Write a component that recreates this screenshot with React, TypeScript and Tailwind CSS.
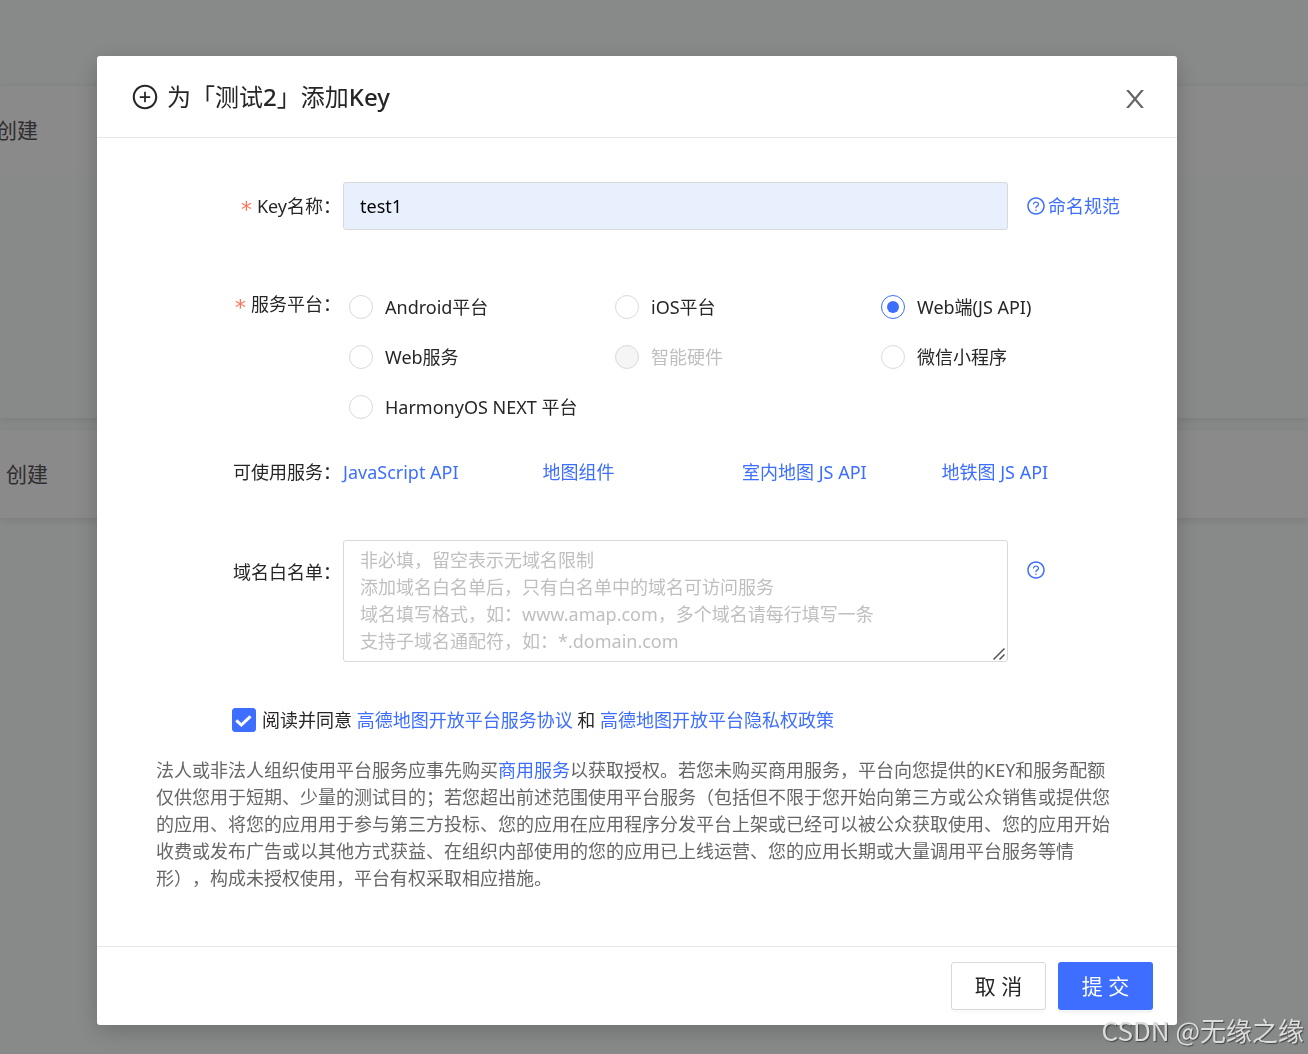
import { useState } from "react"
import { AiOutlinePlusCircle, AiOutlineQuestionCircle } from "react-icons/ai"

const platforms = [
    { id: "android", label: "Android平台" },
    { id: "ios", label: "iOS平台" },
    { id: "web", label: "Web端(JS API)" },
    { id: "webservice", label: "Web服务" },
    { id: "hardware", label: "智能硬件", disabled: true },
    { id: "wechat", label: "微信小程序" },
    { id: "harmony", label: "HarmonyOS NEXT 平台" },
]

const services = ["JavaScript API", "地图组件", "室内地图 JS API", "地铁图 JS API"]

const domainPlaceholder = `非必填，留空表示无域名限制
添加域名白名单后，只有白名单中的域名可访问服务
域名填写格式，如：www.amap.com，多个域名请每行填写一条
支持子域名通配符，如：*.domain.com`

function CloseIcon() {
    return (
        <svg viewBox="0 0 1024 1024" fill="currentColor" className="size-7">
            <path d="M563.8 512l262.5-312.9c4.4-5.2.7-13.1-6.1-13.1h-79.8c-4.7 0-9.2 2.1-12.3 5.7L511.6 449.8 295.1 191.7c-3-3.6-7.5-5.7-12.3-5.7H203c-6.8 0-10.5 7.9-6.1 13.1L459.4 512 196.9 824.9A7.95 7.95 0 0 0 203 838h79.8c4.7 0 9.2-2.1 12.3-5.7l216.5-258.1 216.5 258.1c3 3.6 7.5 5.7 12.3 5.7h79.8c6.8 0 10.5-7.9 6.1-13.1L563.8 512z" />
        </svg>
    )
}

function Required() {
    return <span className="mr-1 pt-1.5 font-['DejaVu_Sans_Mono',monospace] text-[22px] text-[#ff7358]">*</span>
}

function Background() {
    return (
        <div className="h-screen overflow-hidden bg-[#f7fbf9] pt-[86px] text-[21px] text-[#555]">
            <div className="shadow-[0_2px_8px_rgba(0,0,0,0.1)]">
                <div className="flex h-[89px] items-center bg-[#fdfbfb]">
                    <span className="-ml-1">创建</span>
                </div>
                <div className="h-[243px] bg-[#f7fbf9]" />
            </div>
            <div className="mt-3 flex h-[88px] items-center bg-[#fdfbfb] shadow-[0_2px_8px_rgba(0,0,0,0.1)]">
                <span className="ml-1.5">创建</span>
            </div>
        </div>
    )
}

export default function App() {
    const [name, setName] = useState("test1")
    const [platform, setPlatform] = useState("web")
    const [domains, setDomains] = useState("")
    const [agree, setAgree] = useState(true)

    return (
        <div className="font-['Noto_Sans','Noto_Sans_CJK_SC',sans-serif] text-lg leading-[27px] text-[#262626] [text-spacing-trim:space-all]">
            <Background />

            <div className="fixed inset-0 flex items-start justify-center overflow-hidden bg-black/45 pt-14 pr-[34px]">
                <div role="dialog" aria-labelledby="title" className="w-[1080px] rounded-[3px] bg-white shadow-[0_6px_24px_rgba(0,0,0,0.2)]">
                    <div className="flex h-[82px] items-center justify-between border-b border-[#e8e8e8] pr-7 pl-[34px]">
                        <h1 id="title" className="flex items-center gap-2 text-2xl">
                            <AiOutlinePlusCircle className="size-7" />
                            <span>为「测试<b className="font-medium">2</b>」添加<b className="font-medium">Key</b></span>
                        </h1>
                        <button aria-label="关闭" className="pt-1 text-[#666]">
                            <CloseIcon />
                        </button>
                    </div>

                    <form className="px-9 pt-11 pb-[54px]" onSubmit={(event) => event.preventDefault()}>
                        <div className="flex">
                            <label htmlFor="name" className="flex h-12 w-[210px] shrink-0 items-center justify-end pr-0.5">
                                <Required />
                                Key名称：
                            </label>
                            <div className="flex grow items-center">
                                <input
                                    id="name"
                                    value={name}
                                    onChange={(event) => setName(event.target.value)}
                                    className="h-12 w-5/6 rounded-[3px] border border-[#d9d9d9] bg-[#e8f0fe] px-4 text-black"
                                />
                                <a href="#" className="ml-[18px] flex items-center gap-0.5 text-[#3d6eff]">
                                    <AiOutlineQuestionCircle className="size-5" />
                                    命名规范
                                </a>
                            </div>
                        </div>

                        <div role="radiogroup" aria-labelledby="platform" className="mt-[50px] flex">
                            <span id="platform" className="flex h-12 w-[210px] shrink-0 items-center justify-end pr-0.5">
                                <Required />
                                服务平台：
                            </span>
                            <div className="grid grow grid-cols-3 pt-0.5">
                                {platforms.map((item) => (
                                    <label key={item.id} className={item.disabled ? "flex h-[50px] items-center gap-3 pl-1.5 text-[#bfbfbf]" : "flex h-[50px] items-center gap-3 pl-1.5"}>
                                        <input
                                            type="radio"
                                            name="platform"
                                            value={item.id}
                                            disabled={item.disabled}
                                            checked={platform == item.id}
                                            onChange={() => setPlatform(item.id)}
                                            className="grid size-6 shrink-0 appearance-none place-items-center rounded-full border border-[#d9d9d9] bg-white checked:border-[#3d6eff] checked:before:size-3 checked:before:rounded-full checked:before:bg-[#3d6eff] disabled:bg-[#f5f5f5]"
                                        />
                                        {item.label}
                                    </label>
                                ))}
                            </div>
                        </div>

                        <div className="mt-4 flex items-center">
                            <span className="flex h-12 w-[210px] shrink-0 items-center justify-end pr-0.5">可使用服务：</span>
                            <div className="grid grow grid-cols-4">
                                {services.map((service) => (
                                    <a key={service} href="#" className="text-[#3d6eff]">{service}</a>
                                ))}
                            </div>
                        </div>

                        <div className="mt-11 flex">
                            <label htmlFor="domains" className="flex h-16 w-[210px] shrink-0 items-center justify-end pr-0.5">域名白名单：</label>
                            <div className="flex grow items-start">
                                <span className="relative w-5/6">
                                    <textarea
                                        id="domains"
                                        value={domains}
                                        onChange={(event) => setDomains(event.target.value)}
                                        placeholder={domainPlaceholder}
                                        className="block h-[122px] w-full resize-none rounded-[3px] border border-[#d9d9d9] px-4 py-1.5 placeholder:text-[#bfbfbf]"
                                    />
                                    <svg viewBox="0 0 12 12" fill="none" stroke="#555" strokeWidth="1.5" className="pointer-events-none absolute right-[3px] bottom-0.5 size-3">
                                        <path d="M0.5 11.5L11.5 0.5M6.5 11.5L11.5 6.5" />
                                    </svg>
                                </span>
                                <button type="button" aria-label="帮助" className="mt-5 ml-[18px] text-[#3d6eff]">
                                    <AiOutlineQuestionCircle className="size-5" />
                                </button>
                            </div>
                        </div>

                        <div className="mt-[46px] ml-[99px] flex h-6 items-center gap-1.5">
                            <span className="relative size-6">
                                <input
                                    id="agree"
                                    type="checkbox"
                                    checked={agree}
                                    onChange={(event) => setAgree(event.target.checked)}
                                    className="block size-6 appearance-none rounded-[3px] border border-[#d9d9d9] checked:border-[#3d6eff] checked:bg-[#3d6eff]"
                                />
                                <svg viewBox="0 0 24 24" fill="none" stroke="white" strokeWidth="3" className="pointer-events-none absolute inset-0">
                                    <path d="M4.3 12.3l5 4.7L18.5 8.3" />
                                </svg>
                            </span>
                            <p>
                                <label htmlFor="agree">阅读并同意</label> <a href="#" className="text-[#3d6eff]">高德地图开放平台服务协议</a> 和 <a href="#" className="text-[#3d6eff]">高德地图开放平台隐私权政策</a>
                            </p>
                        </div>

                        <p className="mx-[23px] mt-[25px] text-[#666]">
                            法人或非法人组织使用平台服务应事先购买<a href="#" className="text-[#3d6eff]">商用服务</a>以获取授权。若您未购买商用服务，平台向您提供的KEY和服务配额仅供您用于短期、少量的测试目的；若您超出前述范围使用平台服务（包括但不限于您开始向第三方或公众销售或提供您的应用、将您的应用用于参与第三方投标、您的应用在应用程序分发平台上架或已经可以被公众获取使用、您的应用开始收费或发布广告或以其他方式获益、在组织内部使用的您的应用已上线运营、您的应用长期或大量调用平台服务等情形），构成未授权使用，平台有权采取相应措施。
                        </p>
                    </form>

                    <div className="flex justify-end gap-3 border-t border-[#e8e8e8] px-6 py-[15px] text-[21px]">
                        <button className="h-12 w-[95px] rounded-[3px] border border-[#d9d9d9] bg-white shadow-[0_3px_0_rgba(0,0,0,0.02)]">取 消</button>
                        <button className="h-12 w-[95px] rounded-[3px] bg-[#3d6eff] text-white shadow-[0_3px_0_rgba(0,0,0,0.04)]">提 交</button>
                    </div>
                </div>
            </div>

            <span className="fixed right-1 bottom-1.5 font-['Noto_Sans_CJK_SC',sans-serif] text-[26px] leading-9 text-[#dcdcdc] [text-shadow:1px_1px_1px_rgba(0,0,0,0.5)]">CSDN @无缘之缘</span>
        </div>
    )
}
